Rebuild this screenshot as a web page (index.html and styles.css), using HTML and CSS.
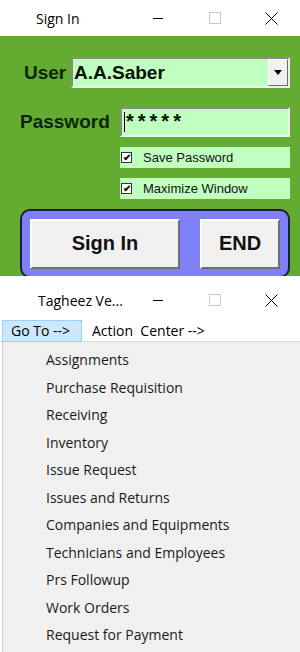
FILE: index.html
```html
<!DOCTYPE html>
<html lang="en">
<head>
    <meta charset="UTF-8">
    <meta name="viewport" content="width=device-width, initial-scale=1.0">
    <title>Sign In</title>
    <link rel="stylesheet" href="styles.css">
</head>
<body>
    <div class="window">
        <div class="titlebar">
            <span class="title">Sign In</span>
            <div class="controls">
                <span class="ctrl"><svg width="12" height="12" viewBox="0 0 12 12"><path d="M1 6.5h10" stroke="#000" stroke-width="1"/></svg></span>
                <span class="ctrl"><svg width="12" height="12" viewBox="0 0 12 12"><rect x="0.5" y="0.5" width="11" height="11" fill="none" stroke="#c8c8c8"/></svg></span>
                <span class="ctrl"><svg width="13" height="13" viewBox="0 0 13 13"><path d="M0.5 0.5l12 12M12.5 0.5l-12 12" stroke="#000" stroke-width="1"/></svg></span>
            </div>
        </div>
        <div class="login">
            <div class="field-row">
                <span class="label">User</span>
                <div class="combo">
                    <span class="combo-text">A.A.Saber</span>
                    <span class="combo-btn"><svg width="8" height="5" viewBox="0 0 8 5"><path d="M0 0h8L4 5z" fill="#000"/></svg></span>
                </div>
            </div>
            <div class="field-row pass-row">
                <span class="label">Password</span>
                <div class="textbox"><span class="caret"></span>*****</div>
            </div>
            <div class="checks">
                <div class="check-row"><span class="box">&#10004;</span>Save Password</div>
                <div class="check-row"><span class="box">&#10004;</span>Maximize Window</div>
            </div>
            <div class="actions">
                <button class="btn btn-main">Sign In</button>
                <button class="btn btn-end">END</button>
            </div>
        </div>
    </div>

    <div class="window">
        <div class="titlebar titlebar-tall">
            <span class="title title-2">Tagheez Ve...</span>
            <div class="controls">
                <span class="ctrl"><svg width="12" height="12" viewBox="0 0 12 12"><path d="M1 6.5h10" stroke="#000" stroke-width="1"/></svg></span>
                <span class="ctrl"><svg width="12" height="12" viewBox="0 0 12 12"><rect x="0.5" y="0.5" width="11" height="11" fill="none" stroke="#c8c8c8"/></svg></span>
                <span class="ctrl"><svg width="13" height="13" viewBox="0 0 13 13"><path d="M0.5 0.5l12 12M12.5 0.5l-12 12" stroke="#000" stroke-width="1"/></svg></span>
            </div>
        </div>
        <div class="menubar">
            <span class="menu-item active">Go To --&gt;</span>
            <span class="menu-item">Action&nbsp; Center --&gt;</span>
        </div>
        <ul class="dropdown">
            <li>Assignments</li>
            <li>Purchase Requisition</li>
            <li>Receiving</li>
            <li>Inventory</li>
            <li>Issue Request</li>
            <li>Issues and Returns</li>
            <li>Companies and Equipments</li>
            <li>Technicians and Employees</li>
            <li>Prs Followup</li>
            <li>Work Orders</li>
            <li>Request for Payment</li>
        </ul>
    </div>
</body>
</html>
```

FILE: styles.css
```css
* {
    margin: 0;
    padding: 0;
    box-sizing: border-box;
}

body {
    width: 300px;
    height: 652px;
    overflow: hidden;
    background-color: #ffffff;
    font-family: 'Open Sans', 'Noto Sans', sans-serif;
    color: #000;
}

.titlebar {
    height: 36px;
    display: flex;
    align-items: center;
    background-color: #ffffff;
}

.titlebar-tall {
    height: 44px;
    padding-top: 4px;
}

.title {
    font-size: 14px;
    padding-left: 36px;
    color: #000;
}

.title-2 {
    padding-left: 38px;
}

.controls {
    margin-left: auto;
    display: flex;
}

.ctrl {
    width: 57px;
    display: flex;
    justify-content: center;
    align-items: center;
}

/* green login panel */
.login {
    height: 240px;
    background-color: #64ab32;
    padding: 21px 10px 0 20px;
}

.field-row {
    display: flex;
    align-items: center;
    height: 31px;
}

.pass-row {
    margin-top: 18px;
}

.label {
    font-family: 'Liberation Sans', Arial, sans-serif;
    font-weight: 700;
    font-size: 19px;
    color: #0c260c;
}

.field-row .label:first-child {
    margin-left: 4px;
    width: 47px;
}

.pass-row .label:first-child {
    margin-left: 0;
    width: 100px;
}

.combo {
    flex: 1;
    height: 31px;
    display: flex;
    align-items: center;
    background-color: #c0ffc0;
    border: 2px solid;
    border-color: #8a8a8a #f0f0f0 #f0f0f0 #8a8a8a;
    padding-left: 1px;
}

.combo-text, .textbox {
    font-family: 'Liberation Sans', Arial, sans-serif;
    font-weight: 700;
    font-size: 19px;
    color: #061006;
}

.combo-btn {
    margin-left: auto;
    width: 20px;
    height: 27px;
    display: flex;
    align-items: center;
    justify-content: center;
    background-color: #f0f0f0;
    border: 1px solid;
    border-color: #ffffff #6a6a6a #6a6a6a #ffffff;
}

.textbox {
    flex: 1;
    height: 30px;
    display: flex;
    align-items: center;
    background-color: #c0ffc0;
    border: 2px solid;
    border-color: #8a8a8a #f0f0f0 #f0f0f0 #8a8a8a;
    padding-left: 2px;
    letter-spacing: 4px;
    font-size: 20px;
}

.caret {
    width: 1px;
    height: 20px;
    background-color: #000;
    margin-right: 1px;
}

.checks {
    margin: 10px 0 0 100px;
    display: flex;
    flex-direction: column;
    gap: 10px;
}

.check-row {
    height: 21px;
    display: flex;
    align-items: center;
    background-color: #c0ffc0;
    font-family: 'Liberation Sans', Arial, sans-serif;
    font-size: 13px;
    color: #111;
}

.box {
    width: 11px;
    height: 11px;
    margin: 0 11px 0 1px;
    background-color: #fff;
    border: 1px solid #333;
    font-size: 10px;
    line-height: 9px;
    text-align: center;
    font-weight: 700;
}

.actions {
    margin-top: 10px;
    height: 69px;
    background-color: #7f7ff8;
    border: 2px solid #1c1c40;
    border-radius: 10px;
    display: flex;
    align-items: center;
    padding: 0 8px;
    gap: 20px;
}

.btn {
    height: 50px;
    background-color: #f0f0f0;
    border: 2px solid;
    border-color: #ffffff #6e6e6e #6e6e6e #ffffff;
    font-family: 'Liberation Sans', Arial, sans-serif;
    font-weight: 700;
    font-size: 20px;
    color: #111;
}

.btn-main {
    width: 150px;
}

.btn-end {
    width: 80px;
}

/* second window menu */
.menubar {
    height: 22px;
    display: flex;
    align-items: center;
    padding-left: 2px;
    font-size: 14px;
    border-bottom: 1px solid #d8d8d8;
}

.menu-item {
    height: 22px;
    display: flex;
    align-items: center;
    padding: 0 8px 0 8px;
}

.menu-item.active {
    width: 80px;
    background-color: #cce8ff;
    border: 1px solid #99d1ff;
    padding-left: 8px;
    margin-right: 2px;
}

.dropdown {
    list-style: none;
    margin-left: 2px;
    height: 310px;
    background-color: #f0f0f0;
    border-left: 1px solid #cccccc;
    padding-top: 6px;
}

.dropdown li {
    height: 27.5px;
    line-height: 24px;
    padding-left: 43px;
    font-size: 14px;
    color: #1a1a1a;
}
```
